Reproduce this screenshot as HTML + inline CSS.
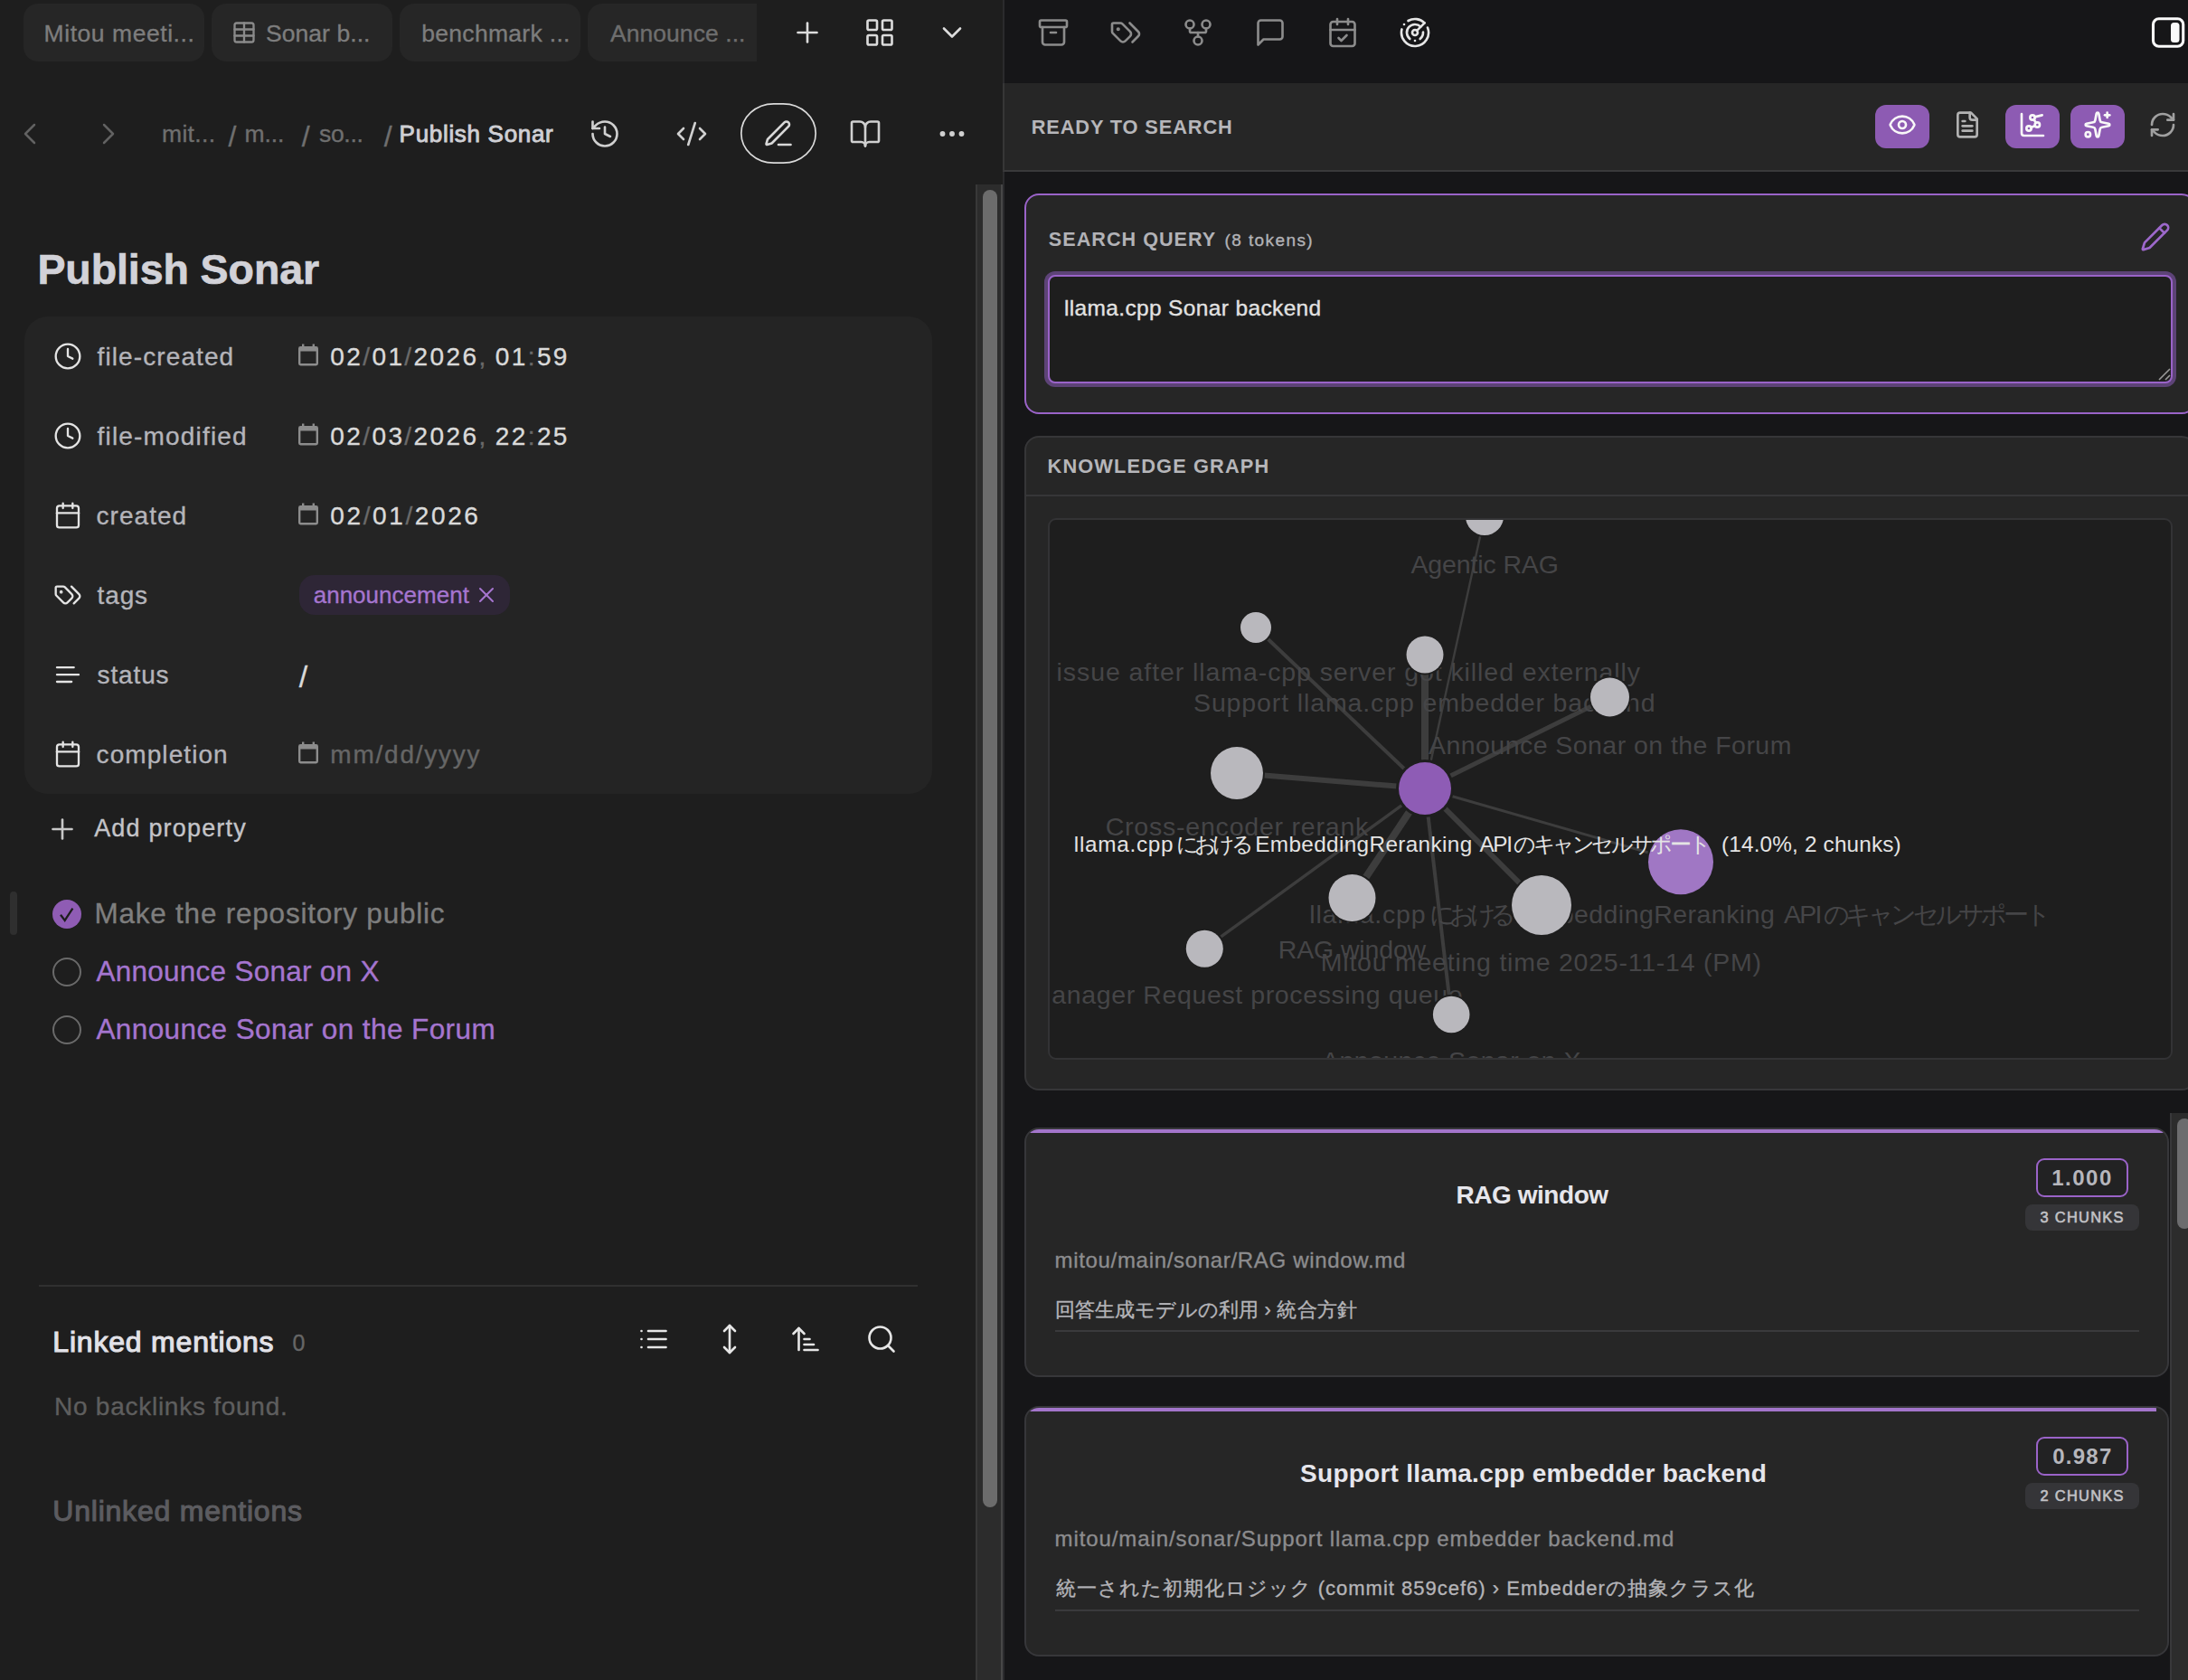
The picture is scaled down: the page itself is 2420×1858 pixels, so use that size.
<!DOCTYPE html>
<html lang="en"><head><meta charset="utf-8"><title>Publish Sonar - Obsidian</title>
<style>
html,body{margin:0;padding:0;background:#161618;}
body{width:2420px;height:1858px;position:relative;overflow:hidden;font-family:"Liberation Sans", sans-serif;}
.b{position:absolute;}
.t{position:absolute;white-space:pre;line-height:1;font-family:"Liberation Sans", sans-serif;}
.r{-webkit-text-stroke:0.35px currentColor;}
.ic{position:absolute;overflow:hidden;display:block;}
svg text{font-family:"Liberation Sans", sans-serif;white-space:pre;}
</style></head>
<body>
<div class="b" style="left:0px;top:0px;width:1109px;height:1858px;background:#1e1e1e"></div>
<div class="b" style="left:26px;top:4px;width:200px;height:64px;background:#262626;border-radius:16px"></div>
<div class="b" style="left:234px;top:4px;width:200px;height:64px;background:#262626;border-radius:16px"></div>
<div class="b" style="left:442px;top:4px;width:200px;height:64px;background:#262626;border-radius:16px"></div>
<div class="b" style="left:650px;top:4px;width:187px;height:64px;background:#262626;border-radius:16px 0 0 16px"></div>
<div class="b" style="left:27px;top:350px;width:1004px;height:528px;background:#242424;border-radius:26px"></div>
<div class="b" style="left:331px;top:636px;width:233px;height:44px;background:#2e2636;border-radius:17px"></div>
<div class="b" style="left:11px;top:986px;width:8px;height:48px;background:#2f2f2f;border-radius:4px"></div>
<div class="b" style="left:58px;top:995px;width:32px;height:32px;border-radius:50%;background:#8f5cb4"></div>
<div class="b" style="left:58px;top:1059px;width:32px;height:32px;border-radius:50%;border:2px solid #6a6a6a;box-sizing:border-box"></div>
<div class="b" style="left:58px;top:1123px;width:32px;height:32px;border-radius:50%;border:2px solid #6a6a6a;box-sizing:border-box"></div>
<div class="b" style="left:43px;top:1421px;width:972px;height:2px;background:#303030"></div>
<div class="b" style="left:1079px;top:204px;width:30px;height:1654px;background:#2c2c2c;border-left:2px solid #383838;border-right:2px solid #474747;box-sizing:border-box"></div>
<div class="b" style="left:1087px;top:210px;width:16px;height:1457px;background:#6c6c6c;border-radius:8px"></div>
<div class="b" style="left:1109px;top:0px;width:1311px;height:1858px;background:#161618;border-left:2px solid #2b2b2d;box-sizing:border-box"></div>
<div class="b" style="left:1109px;top:92px;width:1311px;height:98px;background:#262626;border-bottom:2px solid #39393b;border-left:2px solid #363636;box-sizing:border-box"></div>
<div class="b" style="left:2074px;top:116px;width:60px;height:48px;background:#8d5bb3;border-radius:12px"></div>
<div class="b" style="left:2218px;top:116px;width:60px;height:48px;background:#8d5bb3;border-radius:12px"></div>
<div class="b" style="left:2290px;top:116px;width:60px;height:48px;background:#8d5bb3;border-radius:12px"></div>
<div class="b" style="left:1133px;top:214px;width:1296px;height:244px;background:#262626;border:2px solid #9a63c8;border-radius:16px;box-sizing:border-box"></div>
<div class="b" style="left:1159px;top:304px;width:1244px;height:120px;background:#1e1e1e;border:2px solid #9a63c8;border-radius:8px;box-sizing:border-box;box-shadow:0 0 0 4px #5d4377"></div>
<div class="b" style="left:1133px;top:482px;width:1296px;height:724px;background:#262626;border:2px solid #363638;border-radius:16px;box-sizing:border-box"></div>
<div class="b" style="left:1135px;top:547px;width:1290px;height:2px;background:#363638"></div>
<div class="b" style="left:2400px;top:1231px;width:20px;height:627px;background:#2c2c2c;border-left:2px solid #38383a;box-sizing:border-box"></div>
<div class="b" style="left:2408px;top:1237px;width:16px;height:122px;background:#6c6c6e;border-radius:8px"></div>
<div class="b" style="left:1133px;top:1247px;width:1266px;height:276px;background:#262626;border:2px solid #37373a;border-radius:16px;box-sizing:border-box;overflow:hidden"><div style="position:absolute;left:0;top:0;height:4px;width:1262.0px;background:#a375cb"></div></div>
<div class="b" style="left:1167px;top:1471px;width:1199px;height:2px;background:#3a3a3c"></div>
<div class="b" style="left:2252px;top:1281px;width:102px;height:43px;background:#222223;border:2px solid #9a63c8;border-radius:9px;box-sizing:border-box"></div>
<div class="b" style="left:2240px;top:1332px;width:126px;height:29px;background:#353538;border-radius:8px"></div>
<div class="b" style="left:1133px;top:1555px;width:1266px;height:277px;background:#262626;border:2px solid #37373a;border-radius:16px;box-sizing:border-box;overflow:hidden"><div style="position:absolute;left:0;top:0;height:4px;width:1250.0px;background:#a375cb"></div></div>
<div class="b" style="left:1167px;top:1780px;width:1199px;height:2px;background:#3a3a3c"></div>
<div class="b" style="left:2252px;top:1589px;width:102px;height:43px;background:#222223;border:2px solid #9a63c8;border-radius:9px;box-sizing:border-box"></div>
<div class="b" style="left:2240px;top:1640px;width:126px;height:29px;background:#353538;border-radius:8px"></div>
<div class="b" style="left:1159px;top:573px;width:1244px;height:599px;background:#1e1e1e;border:2px solid #333335;border-radius:9px;box-sizing:border-box"></div><svg class="ic" style="left:1161px;top:575px;width:1240px;height:595px" viewBox="1161 575 1240 595"><line x1="1576" y1="872" x2="1642" y2="571" stroke="#3d3d3d" stroke-width="2.4"/><line x1="1576" y1="872" x2="1389" y2="694" stroke="#3d3d3d" stroke-width="4"/><line x1="1576" y1="872" x2="1576" y2="724" stroke="#3d3d3d" stroke-width="8"/><line x1="1576" y1="872" x2="1780.5" y2="771" stroke="#3d3d3d" stroke-width="5"/><line x1="1576" y1="872" x2="1368" y2="855" stroke="#3d3d3d" stroke-width="6"/><line x1="1576" y1="872" x2="1859" y2="953.2" stroke="#3d3d3d" stroke-width="3"/><line x1="1576" y1="872" x2="1495.5" y2="993" stroke="#3d3d3d" stroke-width="8"/><line x1="1576" y1="872" x2="1705" y2="1001" stroke="#3d3d3d" stroke-width="6"/><line x1="1576" y1="872" x2="1332.3" y2="1049.2" stroke="#3d3d3d" stroke-width="3.4"/><line x1="1576" y1="872" x2="1605.2" y2="1122" stroke="#3d3d3d" stroke-width="4"/><text x="1560.5" y="633.5" textLength="163.4" lengthAdjust="spacing" fill="#454547" font-size="28.5">Agentic RAG</text><text x="1168.6" y="752.8" textLength="645.4" lengthAdjust="spacing" fill="#454547" font-size="28.5">issue after llama-cpp server got killed externally</text><text x="1320" y="787" textLength="510.6" lengthAdjust="spacing" fill="#454547" font-size="28.5">Support llama.cpp embedder backend</text><text x="1580" y="834.2" textLength="401.4" lengthAdjust="spacing" fill="#454547" font-size="28.5">Announce Sonar on the Forum</text><text x="1222.7" y="923.6" textLength="290.6" lengthAdjust="spacing" fill="#454547" font-size="28.5">Cross-encoder rerank</text><text x="1448.3" y="1021.4" textLength="128.3" lengthAdjust="spacing" fill="#454547" font-size="28.5">llama.cpp</text><text x="1580.5" y="1021.4" textLength="96.5" lengthAdjust="spacing" fill="#454547" font-size="27.5">における</text><text x="1681" y="1021.4" textLength="281.8" lengthAdjust="spacing" fill="#454547" font-size="28.5">EmbeddingReranking</text><text x="1973" y="1021.4" textLength="42.3" lengthAdjust="spacing" fill="#454547" font-size="28.5">API</text><text x="2016.5" y="1021.4" textLength="252.0" lengthAdjust="spacing" fill="#454547" font-size="27.5">のキャンセルサポート</text><text x="1413.8" y="1059.6" textLength="163.4" lengthAdjust="spacing" fill="#454547" font-size="28.5">RAG window</text><text x="1460.8" y="1074.4" textLength="487.2" lengthAdjust="spacing" fill="#454547" font-size="28.5">Mitou meeting time 2025-11-14 (PM)</text><text x="1139" y="1110" textLength="478.5" lengthAdjust="spacing" fill="#454547" font-size="28.5">Manager Request processing queue</text><text x="1462" y="1183.4" textLength="286.5" lengthAdjust="spacing" fill="#454547" font-size="28.5">Announce Sonar on X</text><circle cx="1642" cy="571" r="23" fill="#1e1e1e"/><circle cx="1642" cy="571" r="21" fill="#b9b8bd"/><circle cx="1389" cy="694" r="19" fill="#1e1e1e"/><circle cx="1389" cy="694" r="17" fill="#b9b8bd"/><circle cx="1576" cy="724" r="22.5" fill="#1e1e1e"/><circle cx="1576" cy="724" r="20.5" fill="#b9b8bd"/><circle cx="1780.5" cy="771" r="23.5" fill="#1e1e1e"/><circle cx="1780.5" cy="771" r="21.5" fill="#b9b8bd"/><circle cx="1368" cy="855" r="31" fill="#1e1e1e"/><circle cx="1368" cy="855" r="29" fill="#b9b8bd"/><circle cx="1859" cy="953.2" r="38" fill="#1e1e1e"/><circle cx="1859" cy="953.2" r="36" fill="#a077c4"/><circle cx="1495.5" cy="993" r="28" fill="#1e1e1e"/><circle cx="1495.5" cy="993" r="26" fill="#b9b8bd"/><circle cx="1705" cy="1001" r="35" fill="#1e1e1e"/><circle cx="1705" cy="1001" r="33" fill="#b9b8bd"/><circle cx="1332.3" cy="1049.2" r="22.5" fill="#1e1e1e"/><circle cx="1332.3" cy="1049.2" r="20.5" fill="#b9b8bd"/><circle cx="1605.2" cy="1122" r="22.3" fill="#1e1e1e"/><circle cx="1605.2" cy="1122" r="20.3" fill="#b9b8bd"/><circle cx="1576" cy="872" r="32" fill="#1e1e1e"/><circle cx="1576" cy="872" r="29" fill="#8e5cb5"/><g fill="#e4e4e4"><text x="1187.8" y="942" textLength="109.7" lengthAdjust="spacing" font-size="24.3">llama.cpp</text><text x="1301" y="942" textLength="85.5" lengthAdjust="spacing" font-size="24">における</text><text x="1388.2" y="942" textLength="240.0" lengthAdjust="spacing" font-size="24.3">EmbeddingReranking</text><text x="1636.5" y="942" textLength="36.5" lengthAdjust="spacing" font-size="24.3">API</text><text x="1674" y="942" textLength="218.5" lengthAdjust="spacing" font-size="24">のキャンセルサポート</text><text x="1904" y="942" textLength="198.7" lengthAdjust="spacing" font-size="24.3">(14.0%, 2 chunks)</text></g></svg>
<svg class="ic" style="left:329px;top:380px;width:24px;height:26px" viewBox="0 0 24 26"><path d="M5 0.5h2.4v2.6h9.2V0.5H19v2.6h1.6a2.4 2.4 0 0 1 2.4 2.4v16.6a2.4 2.4 0 0 1-2.4 2.4H3.4A2.4 2.4 0 0 1 1 22.1V5.500a2.4 2.4 0 0 1 2.4-2.4H5zM3.400 8.6v13.500h17.200V8.600z" fill="#8c8c8c" fill-rule="evenodd"/></svg>
<svg class="ic" style="left:329px;top:468px;width:24px;height:26px" viewBox="0 0 24 26"><path d="M5 0.5h2.4v2.6h9.2V0.5H19v2.6h1.6a2.4 2.4 0 0 1 2.4 2.4v16.6a2.4 2.4 0 0 1-2.4 2.4H3.4A2.4 2.4 0 0 1 1 22.1V5.500a2.4 2.4 0 0 1 2.4-2.4H5zM3.400 8.6v13.500h17.200V8.600z" fill="#8c8c8c" fill-rule="evenodd"/></svg>
<svg class="ic" style="left:329px;top:556px;width:24px;height:26px" viewBox="0 0 24 26"><path d="M5 0.5h2.4v2.6h9.2V0.5H19v2.6h1.6a2.4 2.4 0 0 1 2.4 2.4v16.6a2.4 2.4 0 0 1-2.4 2.4H3.4A2.4 2.4 0 0 1 1 22.1V5.500a2.4 2.4 0 0 1 2.4-2.4H5zM3.400 8.6v13.500h17.200V8.600z" fill="#8c8c8c" fill-rule="evenodd"/></svg>
<svg class="ic" style="left:329px;top:820px;width:24px;height:26px" viewBox="0 0 24 26"><path d="M5 0.5h2.4v2.6h9.2V0.5H19v2.6h1.6a2.4 2.4 0 0 1 2.4 2.4v16.6a2.4 2.4 0 0 1-2.4 2.4H3.4A2.4 2.4 0 0 1 1 22.1V5.500a2.4 2.4 0 0 1 2.4-2.4H5zM3.400 8.6v13.500h17.200V8.600z" fill="#8c8c8c" fill-rule="evenodd"/></svg>
<svg class="ic" style="left:255.9px;top:22.2px;width:28px;height:28px;color:#8a8a8a" viewBox="0 0 24 24" fill="none" stroke="currentColor" stroke-width="2.0" stroke-linecap="round" stroke-linejoin="round"><path d="M12 3v18"/><rect width="18" height="18" x="3" y="3" rx="2"/><path d="M3 9h18"/><path d="M3 15h18"/></svg>
<svg class="ic" style="left:875.0px;top:17.6px;width:36px;height:36px;color:#dcdcdc" viewBox="0 0 24 24" fill="none" stroke="currentColor" stroke-width="1.75" stroke-linecap="round" stroke-linejoin="round"><path d="M5 12h14"/><path d="M12 5v14"/></svg>
<svg class="ic" style="left:955.0px;top:17.6px;width:36px;height:36px;color:#dcdcdc" viewBox="0 0 24 24" fill="none" stroke="currentColor" stroke-width="1.75" stroke-linecap="round" stroke-linejoin="round"><rect width="7" height="7" x="3" y="3" rx="1"/><rect width="7" height="7" x="14" y="3" rx="1"/><rect width="7" height="7" x="14" y="14" rx="1"/><rect width="7" height="7" x="3" y="14" rx="1"/></svg>
<svg class="ic" style="left:1035.0px;top:17.6px;width:36px;height:36px;color:#dcdcdc" viewBox="0 0 24 24" fill="none" stroke="currentColor" stroke-width="1.75" stroke-linecap="round" stroke-linejoin="round"><path d="m6 9 6 6 6-6"/></svg>
<svg class="ic" style="left:12.7px;top:128.0px;width:40px;height:40px;color:#626262" viewBox="0 0 24 24" fill="none" stroke="currentColor" stroke-width="1.5" stroke-linecap="round" stroke-linejoin="round"><path d="m15 18-6-6 6-6"/></svg>
<svg class="ic" style="left:100.1px;top:128.0px;width:40px;height:40px;color:#626262" viewBox="0 0 24 24" fill="none" stroke="currentColor" stroke-width="1.5" stroke-linecap="round" stroke-linejoin="round"><path d="m9 18 6-6-6-6"/></svg>
<svg class="ic" style="left:650.5px;top:130.0px;width:36px;height:36px;color:#d0d0d0" viewBox="0 0 24 24" fill="none" stroke="currentColor" stroke-width="1.75" stroke-linecap="round" stroke-linejoin="round"><path d="M3 12a9 9 0 1 0 9-9 9.75 9.75 0 0 0-6.74 2.74L3 8"/><path d="M3 3v5h5"/><path d="M12 7v5l4 2"/></svg>
<svg class="ic" style="left:747.0px;top:130.0px;width:36px;height:36px;color:#d0d0d0" viewBox="0 0 24 24" fill="none" stroke="currentColor" stroke-width="1.75" stroke-linecap="round" stroke-linejoin="round"><path d="m18 16 4-4-4-4"/><path d="m6 8-4 4 4 4"/><path d="m14.5 4-5 16"/></svg>
<svg class="ic" style="left:817px;top:112px;width:88px;height:71px" viewBox="0 0 88 71"><rect x="2.800" y="2.800" width="82.400" height="65.400" rx="36" ry="32.700" fill="none" stroke="#dadada" stroke-width="1.700"/></svg>
<svg class="ic" style="left:843.0px;top:130.0px;width:36px;height:36px;color:#d8d8d8" viewBox="0 0 24 24" fill="none" stroke="currentColor" stroke-width="1.75" stroke-linecap="round" stroke-linejoin="round"><path d="M12 20h9"/><path d="M16.376 3.622a1 1 0 0 1 3.002 3.002L7.368 18.635a2 2 0 0 1-.855.506l-2.872.838a.5.5 0 0 1-.62-.62l.838-2.872a2 2 0 0 1 .506-.854z"/></svg>
<svg class="ic" style="left:939.0px;top:130.0px;width:36px;height:36px;color:#d0d0d0" viewBox="0 0 24 24" fill="none" stroke="currentColor" stroke-width="1.75" stroke-linecap="round" stroke-linejoin="round"><path d="M12 7v14"/><path d="M3 18a1 1 0 0 1-1-1V4a1 1 0 0 1 1-1h5a4 4 0 0 1 4 4 4 4 0 0 1 4-4h5a1 1 0 0 1 1 1v13a1 1 0 0 1-1 1h-6a3 3 0 0 0-3 3 3 3 0 0 0-3-3z"/></svg>
<svg class="ic" style="left:1035.0px;top:130.0px;width:36px;height:36px;color:#d0d0d0" viewBox="0 0 24 24" fill="none" stroke="currentColor" stroke-width="1.9" stroke-linecap="round" stroke-linejoin="round"><circle cx="12" cy="12" r="1"/><circle cx="19" cy="12" r="1"/><circle cx="5" cy="12" r="1"/></svg>
<svg class="ic" style="left:58.6px;top:378.0px;width:32px;height:32px;color:#e4e4e4" viewBox="0 0 24 24" fill="none" stroke="currentColor" stroke-width="1.75" stroke-linecap="round" stroke-linejoin="round"><circle cx="12" cy="12" r="10"/><polyline points="12 6 12 12 16 14"/></svg>
<svg class="ic" style="left:58.6px;top:466.0px;width:32px;height:32px;color:#e4e4e4" viewBox="0 0 24 24" fill="none" stroke="currentColor" stroke-width="1.75" stroke-linecap="round" stroke-linejoin="round"><circle cx="12" cy="12" r="10"/><polyline points="12 6 12 12 16 14"/></svg>
<svg class="ic" style="left:59.0px;top:554.0px;width:32px;height:32px;color:#e4e4e4" viewBox="0 0 24 24" fill="none" stroke="currentColor" stroke-width="1.75" stroke-linecap="round" stroke-linejoin="round"><path d="M8 2v4"/><path d="M16 2v4"/><rect width="18" height="18" x="3" y="4" rx="2"/><path d="M3 10h18"/></svg>
<svg class="ic" style="left:58.6px;top:642.0px;width:32px;height:32px;color:#e4e4e4" viewBox="0 0 24 24" fill="none" stroke="currentColor" stroke-width="1.75" stroke-linecap="round" stroke-linejoin="round"><path d="m15 5 6.3 6.3a2.4 2.4 0 0 1 0 3.4L17 19"/><path d="M9.586 5.586A2 2 0 0 0 8.172 5H3a1 1 0 0 0-1 1v5.172a2 2 0 0 0 .586 1.414L8.29 18.29a2.426 2.426 0 0 0 3.42 0l3.58-3.58a2.426 2.426 0 0 0 0-3.42z"/><circle cx="6.5" cy="9.5" r=".5" fill="currentColor"/></svg>
<svg class="ic" style="left:58.6px;top:730.0px;width:32px;height:32px;color:#e4e4e4" viewBox="0 0 24 24" fill="none" stroke="currentColor" stroke-width="1.75" stroke-linecap="round" stroke-linejoin="round"><path d="M17 6.1H3"/><path d="M21 12.1H3"/><path d="M15.1 18H3"/></svg>
<svg class="ic" style="left:59.0px;top:818.0px;width:32px;height:32px;color:#e4e4e4" viewBox="0 0 24 24" fill="none" stroke="currentColor" stroke-width="1.75" stroke-linecap="round" stroke-linejoin="round"><path d="M8 2v4"/><path d="M16 2v4"/><rect width="18" height="18" x="3" y="4" rx="2"/><path d="M3 10h18"/></svg>
<svg class="ic" style="left:524.0px;top:644.0px;width:28px;height:28px;color:#a575cf" viewBox="0 0 24 24" fill="none" stroke="currentColor" stroke-width="1.75" stroke-linecap="round" stroke-linejoin="round"><path d="M18 6 6 18"/><path d="m6 6 12 12"/></svg>
<svg class="ic" style="left:51.0px;top:898.5px;width:36px;height:36px;color:#c8c8c8" viewBox="0 0 24 24" fill="none" stroke="currentColor" stroke-width="1.75" stroke-linecap="round" stroke-linejoin="round"><path d="M5 12h14"/><path d="M12 5v14"/></svg>
<svg class="ic" style="left:58px;top:995px;width:32px;height:32px" viewBox="58 995 32 32"><path d="M67 1011.700 71.700 1017.900 80.400 1004.600" fill="none" stroke="#1e1e1e" stroke-width="2.300"/></svg>
<svg class="ic" style="left:705.0px;top:1463.0px;width:36px;height:36px;color:#e6e6e6" viewBox="0 0 24 24" fill="none" stroke="currentColor" stroke-width="1.75" stroke-linecap="round" stroke-linejoin="round"><path d="M3 12h.01"/><path d="M3 18h.01"/><path d="M3 6h.01"/><path d="M8 12h13"/><path d="M8 18h13"/><path d="M8 6h13"/></svg>
<svg class="ic" style="left:789.0px;top:1463.0px;width:36px;height:36px;color:#e6e6e6" viewBox="0 0 24 24" fill="none" stroke="currentColor" stroke-width="1.75" stroke-linecap="round" stroke-linejoin="round"><path d="M12 2v20"/><path d="m8 18 4 4 4-4"/><path d="m8 6 4-4 4 4"/></svg>
<svg class="ic" style="left:873.0px;top:1463.0px;width:36px;height:36px;color:#e6e6e6" viewBox="0 0 24 24" fill="none" stroke="currentColor" stroke-width="1.75" stroke-linecap="round" stroke-linejoin="round"><path d="m3 8 4-4 4 4"/><path d="M7 4v16"/><path d="M11 12h4"/><path d="M11 16h7"/><path d="M11 20h10"/></svg>
<svg class="ic" style="left:957.0px;top:1463.0px;width:36px;height:36px;color:#e6e6e6" viewBox="0 0 24 24" fill="none" stroke="currentColor" stroke-width="1.75" stroke-linecap="round" stroke-linejoin="round"><circle cx="11" cy="11" r="8"/><path d="m21 21-4.3-4.3"/></svg>
<svg class="ic" style="left:1147.0px;top:17.6px;width:36px;height:36px;color:#8c8c8c" viewBox="0 0 24 24" fill="none" stroke="currentColor" stroke-width="1.75" stroke-linecap="round" stroke-linejoin="round"><rect width="20" height="5" x="2" y="3" rx="1"/><path d="M4 8v11a2 2 0 0 0 2 2h12a2 2 0 0 0 2-2V8"/><path d="M10 12h4"/></svg>
<svg class="ic" style="left:1227.0px;top:17.6px;width:36px;height:36px;color:#8c8c8c" viewBox="0 0 24 24" fill="none" stroke="currentColor" stroke-width="1.75" stroke-linecap="round" stroke-linejoin="round"><path d="m15 5 6.3 6.3a2.4 2.4 0 0 1 0 3.4L17 19"/><path d="M9.586 5.586A2 2 0 0 0 8.172 5H3a1 1 0 0 0-1 1v5.172a2 2 0 0 0 .586 1.414L8.29 18.29a2.426 2.426 0 0 0 3.42 0l3.58-3.58a2.426 2.426 0 0 0 0-3.42z"/><circle cx="6.5" cy="9.5" r=".5" fill="currentColor"/></svg>
<svg class="ic" style="left:1307.0px;top:17.6px;width:36px;height:36px;color:#8c8c8c" viewBox="0 0 24 24" fill="none" stroke="currentColor" stroke-width="1.75" stroke-linecap="round" stroke-linejoin="round"><circle cx="12" cy="18" r="3"/><circle cx="6" cy="6" r="3"/><circle cx="18" cy="6" r="3"/><path d="M18 9v2c0 .6-.4 1-1 1H7c-.6 0-1-.4-1-1V9"/><path d="M12 12v3"/></svg>
<svg class="ic" style="left:1387.0px;top:17.6px;width:36px;height:36px;color:#8c8c8c" viewBox="0 0 24 24" fill="none" stroke="currentColor" stroke-width="1.75" stroke-linecap="round" stroke-linejoin="round"><path d="M21 15a2 2 0 0 1-2 2H7l-4 4V5a2 2 0 0 1 2-2h14a2 2 0 0 1 2 2z"/></svg>
<svg class="ic" style="left:1467.0px;top:17.6px;width:36px;height:36px;color:#8c8c8c" viewBox="0 0 24 24" fill="none" stroke="currentColor" stroke-width="1.75" stroke-linecap="round" stroke-linejoin="round"><path d="M8 2v4"/><path d="M16 2v4"/><rect width="18" height="18" x="3" y="4" rx="2"/><path d="M3 10h18"/><path d="m9 16 2 2 4-4"/></svg>
<svg class="ic" style="left:1547.0px;top:17.6px;width:36px;height:36px;color:#e6e6e6" viewBox="0 0 24 24" fill="none" stroke="currentColor" stroke-width="1.75" stroke-linecap="round" stroke-linejoin="round"><path d="M19.07 4.93A10 10 0 0 0 6.99 3.34"/><path d="M4 6h.01"/><path d="M2.29 9.62A10 10 0 1 0 21.31 8.35"/><path d="M16.24 7.76A6 6 0 1 0 8.23 16.67"/><path d="M12 18h.01"/><path d="M17.99 11.66A6 6 0 0 1 15.77 16.67"/><circle cx="12" cy="12" r="2"/><path d="m13.41 10.59 5.66-5.66"/></svg>
<svg class="ic" style="left:2378px;top:18px;width:40px;height:36px" viewBox="0 0 40 36"><rect x="3.500" y="2.800" width="33.200" height="30.400" rx="6.200" fill="none" stroke="#fafafa" stroke-width="3.100"/><rect x="23" y="7" width="9.500" height="22" rx="3.500" fill="#fafafa"/></svg>
<svg class="ic" style="left:2088.0px;top:122.0px;width:32px;height:32px;color:#f8f8f8" viewBox="0 0 24 24" fill="none" stroke="currentColor" stroke-width="2" stroke-linecap="round" stroke-linejoin="round"><path d="M2.062 12.348a1 1 0 0 1 0-.696 10.75 10.75 0 0 1 19.876 0 1 1 0 0 1 0 .696 10.75 10.75 0 0 1-19.876 0"/><circle cx="12" cy="12" r="3"/></svg>
<svg class="ic" style="left:2160.0px;top:122.0px;width:32px;height:32px;color:#b2b2b2" viewBox="0 0 24 24" fill="none" stroke="currentColor" stroke-width="2" stroke-linecap="round" stroke-linejoin="round"><path d="M15 2H6a2 2 0 0 0-2 2v16a2 2 0 0 0 2 2h12a2 2 0 0 0 2-2V7Z"/><path d="M14 2v4a2 2 0 0 0 2 2h4"/><path d="M10 9H8"/><path d="M16 13H8"/><path d="M16 17H8"/></svg>
<svg class="ic" style="left:2232.0px;top:122.0px;width:32px;height:32px;color:#f8f8f8" viewBox="0 0 24 24" fill="none" stroke="currentColor" stroke-width="2" stroke-linecap="round" stroke-linejoin="round"><path d="m13.11 7.664 1.78 2.672"/><path d="m14.162 12.788-3.324 1.424"/><path d="m20 4-6.06 1.515"/><path d="M3 3v16a2 2 0 0 0 2 2h16"/><circle cx="12" cy="6" r="2"/><circle cx="16" cy="12" r="2"/><circle cx="9" cy="15" r="2"/></svg>
<svg class="ic" style="left:2304.0px;top:122.0px;width:32px;height:32px;color:#f8f8f8" viewBox="0 0 24 24" fill="none" stroke="currentColor" stroke-width="2" stroke-linecap="round" stroke-linejoin="round"><path d="M11.017 2.814a1 1 0 0 1 1.966 0l1.051 5.558a2 2 0 0 0 1.594 1.594l5.558 1.051a1 1 0 0 1 0 1.966l-5.558 1.051a2 2 0 0 0-1.594 1.594l-1.051 5.558a1 1 0 0 1-1.966 0l-1.051-5.558a2 2 0 0 0-1.594-1.594l-5.558-1.051a1 1 0 0 1 0-1.966l5.558-1.051a2 2 0 0 0 1.594-1.594z"/><path d="M20 2v4"/><path d="M22 4h-4"/><circle cx="4" cy="20" r="2"/></svg>
<svg class="ic" style="left:2376.0px;top:122.0px;width:32px;height:32px;color:#a0a0a0" viewBox="0 0 24 24" fill="none" stroke="currentColor" stroke-width="2" stroke-linecap="round" stroke-linejoin="round"><path d="M3 12a9 9 0 0 1 9-9 9.75 9.75 0 0 1 6.74 2.74L21 8"/><path d="M21 3v5h-5"/><path d="M21 12a9 9 0 0 1-9 9 9.75 9.75 0 0 1-6.74-2.74L3 16"/><path d="M8 16H3v5"/></svg>
<svg class="ic" style="left:2367.0px;top:245.0px;width:34px;height:34px;color:#9d68cb" viewBox="0 0 24 24" fill="none" stroke="currentColor" stroke-width="1.9" stroke-linecap="round" stroke-linejoin="round"><path d="M21.174 6.812a1 1 0 0 0-3.986-3.987L3.842 16.174a2 2 0 0 0-.5.83l-1.321 4.352a.5.5 0 0 0 .623.622l4.353-1.32a2 2 0 0 0 .83-.497z"/><path d="m15 5 4 4"/></svg>
<svg class="ic" style="left:2386px;top:406px;width:16px;height:16px" viewBox="0 0 16 16"><path d="M2 14 14 2M9 14l5-5" stroke="#9a9a9a" stroke-width="1.600" fill="none"/></svg>
<div class="t r" style="left:48.6px;top:24.0px;font-size:26.5px;color:#7d7d7d;letter-spacing:0.547px;">Mitou meeti...</div>
<div class="t r" style="left:293.9px;top:24.0px;font-size:26.5px;color:#7d7d7d;letter-spacing:0.073px;">Sonar b...</div>
<div class="t r" style="left:466.2px;top:24.0px;font-size:26.5px;color:#7d7d7d;letter-spacing:0.310px;">benchmark ...</div>
<div class="t r" style="left:674.9px;top:24.0px;font-size:26.5px;color:#6e6e6e;letter-spacing:0.069px;">Announce ...</div>
<div class="t r" style="left:179.0px;top:135.2px;font-size:26.5px;color:#6f6f6f;letter-spacing:0.330px;">mit...</div>
<div class="t r" style="left:252.4px;top:134.7px;font-size:32px;color:#6f6f6f;">/</div>
<div class="t r" style="left:270.5px;top:135.2px;font-size:26.5px;color:#6f6f6f;letter-spacing:-0.067px;">m...</div>
<div class="t r" style="left:333.8px;top:134.7px;font-size:32px;color:#6f6f6f;">/</div>
<div class="t r" style="left:352.9px;top:135.2px;font-size:26.5px;color:#6f6f6f;letter-spacing:-0.253px;">so...</div>
<div class="t r" style="left:424.7px;top:134.7px;font-size:32px;color:#6f6f6f;">/</div>
<div class="t" style="left:441.6px;top:135.4px;font-size:26px;color:#cfcfd4;letter-spacing:0.690px;-webkit-text-stroke:0.9px #cfcfd4;">Publish Sonar</div>
<div class="t" style="left:41.4px;top:274.8px;font-size:46.5px;color:#d2d2d8;font-weight:700;letter-spacing:-0.078px;-webkit-text-stroke:0.7px #d2d2d8;">Publish Sonar</div>
<div class="t r" style="left:107.6px;top:380.5px;font-size:28px;color:#b4b4ba;letter-spacing:1.097px;">file-created</div>
<div class="t r" style="left:107.6px;top:468.5px;font-size:28px;color:#b4b4ba;letter-spacing:1.177px;">file-modified</div>
<div class="t r" style="left:106.6px;top:556.5px;font-size:28px;color:#b4b4ba;letter-spacing:1.030px;">created</div>
<div class="t r" style="left:107.6px;top:644.5px;font-size:28px;color:#b4b4ba;letter-spacing:0.859px;">tags</div>
<div class="t r" style="left:107.6px;top:732.5px;font-size:28px;color:#b4b4ba;letter-spacing:0.859px;">status</div>
<div class="t r" style="left:106.6px;top:820.5px;font-size:28px;color:#b4b4ba;letter-spacing:1.074px;">completion</div>
<div class="t r" style="left:365.3px;top:380.5px;font-size:28px;color:#dadada;letter-spacing:2.394px;word-spacing:-2px"><span style="color:#dadada">02</span><span style="color:#6a6a6a">/</span><span style="color:#dadada">01</span><span style="color:#6a6a6a">/</span><span style="color:#dadada">2026</span><span style="color:#6a6a6a">,</span><span style="color:#dadada"> 01</span><span style="color:#6a6a6a">:</span><span style="color:#dadada">59</span></div>
<div class="t r" style="left:365.3px;top:468.5px;font-size:28px;color:#dadada;letter-spacing:2.394px;word-spacing:-2px"><span style="color:#dadada">02</span><span style="color:#6a6a6a">/</span><span style="color:#dadada">03</span><span style="color:#6a6a6a">/</span><span style="color:#dadada">2026</span><span style="color:#6a6a6a">,</span><span style="color:#dadada"> 22</span><span style="color:#6a6a6a">:</span><span style="color:#dadada">25</span></div>
<div class="t r" style="left:365.3px;top:556.5px;font-size:28px;color:#dadada;letter-spacing:2.604px;"><span style="color:#dadada">02</span><span style="color:#6a6a6a">/</span><span style="color:#dadada">01</span><span style="color:#6a6a6a">/</span><span style="color:#dadada">2026</span></div>
<div class="t r" style="left:365.3px;top:820.5px;font-size:28px;color:#666;letter-spacing:1.772px;">mm/dd/yyyy</div>
<div class="t r" style="left:346.7px;top:645.0px;font-size:26px;color:#a575cf;letter-spacing:0.018px;">announcement</div>
<div class="t r" style="left:330.8px;top:730.8px;font-size:34px;color:#dadada;">/</div>
<div class="t r" style="left:104.2px;top:903.4px;font-size:27px;color:#c4c4c8;letter-spacing:1.174px;">Add property</div>
<div class="t r" style="left:104.4px;top:995.4px;font-size:31.5px;color:#7e7e7e;letter-spacing:0.779px;">Make the repository public</div>
<div class="t r" style="left:106.4px;top:1059.3px;font-size:31.5px;color:#a575cf;letter-spacing:0.265px;">Announce Sonar on X</div>
<div class="t r" style="left:106.4px;top:1123.4px;font-size:31.5px;color:#a575cf;letter-spacing:0.403px;">Announce Sonar on the Forum</div>
<div class="t" style="left:58.3px;top:1467.9px;font-size:32px;color:#e2e2e8;letter-spacing:0.805px;-webkit-text-stroke:1.1px #e2e2e8;">Linked mentions</div>
<div class="t r" style="left:323.6px;top:1473.4px;font-size:25px;color:#666;">0</div>
<div class="t r" style="left:60.0px;top:1541.7px;font-size:28px;color:#5e5e5e;letter-spacing:0.746px;">No backlinks found.</div>
<div class="t" style="left:58.3px;top:1655.2px;font-size:32px;color:#5c5c60;letter-spacing:0.778px;-webkit-text-stroke:1.1px #5c5c60;">Unlinked mentions</div>
<div class="t" style="left:1140.7px;top:129.9px;font-size:21.8px;color:#b6b6ba;font-weight:700;letter-spacing:0.865px;">READY TO SEARCH</div>
<div class="t" style="left:1159.8px;top:254.1px;font-size:21.6px;color:#b2b2b6;font-weight:700;letter-spacing:1.021px;">SEARCH QUERY</div>
<div class="t r" style="left:1354.6px;top:256.3px;font-size:19px;color:#b2b2b6;letter-spacing:1.394px;">(8 tokens)</div>
<div class="t r" style="left:1176.9px;top:328.7px;font-size:24.5px;color:#e2e2e2;letter-spacing:0.357px;">llama.cpp Sonar backend</div>
<div class="t" style="left:1158.5px;top:504.9px;font-size:21.8px;color:#b6b6ba;font-weight:700;letter-spacing:1.134px;">KNOWLEDGE GRAPH</div>
<div class="t" style="left:1610.6px;top:1308.3px;font-size:28px;color:#e6e6ec;font-weight:700;letter-spacing:-0.463px;">RAG window</div>
<div class="t r" style="left:1166.5px;top:1381.6px;font-size:24px;color:#8c8c8e;letter-spacing:0.679px;">mitou/main/sonar/RAG window.md</div>
<div class="t r" style="left:1166.5px;top:1437.8px;font-size:22px;color:#b4b4b8;letter-spacing:0.178px;">回答生成モデルの利用 › 統合方針</div>
<div class="t" style="left:2269.2px;top:1291.1px;font-size:24px;color:#b6b6bc;font-weight:700;letter-spacing:1.522px;">1.000</div>
<div class="t" style="left:2256.5px;top:1338.3px;font-size:16.4px;color:#c2c2c6;letter-spacing:1.293px;-webkit-text-stroke:0.6px #c2c2c6;">3 CHUNKS</div>
<div class="t" style="left:1438.1px;top:1616.3px;font-size:28px;color:#e6e6ec;font-weight:700;letter-spacing:0.257px;">Support llama.cpp embedder backend</div>
<div class="t r" style="left:1166.5px;top:1689.6px;font-size:24px;color:#8c8c8e;letter-spacing:0.913px;">mitou/main/sonar/Support llama.cpp embedder backend.md</div>
<div class="t r" style="left:1167.5px;top:1745.8px;font-size:22px;color:#b4b4b8;letter-spacing:1.004px;">統一された初期化ロジック (commit 859cef6) › Embedderの抽象クラス化</div>
<div class="t" style="left:2270.2px;top:1599.1px;font-size:24px;color:#b6b6bc;font-weight:700;letter-spacing:1.272px;">0.987</div>
<div class="t" style="left:2256.5px;top:1646.3px;font-size:16.4px;color:#c2c2c6;letter-spacing:1.293px;-webkit-text-stroke:0.6px #c2c2c6;">2 CHUNKS</div>
</body></html>
